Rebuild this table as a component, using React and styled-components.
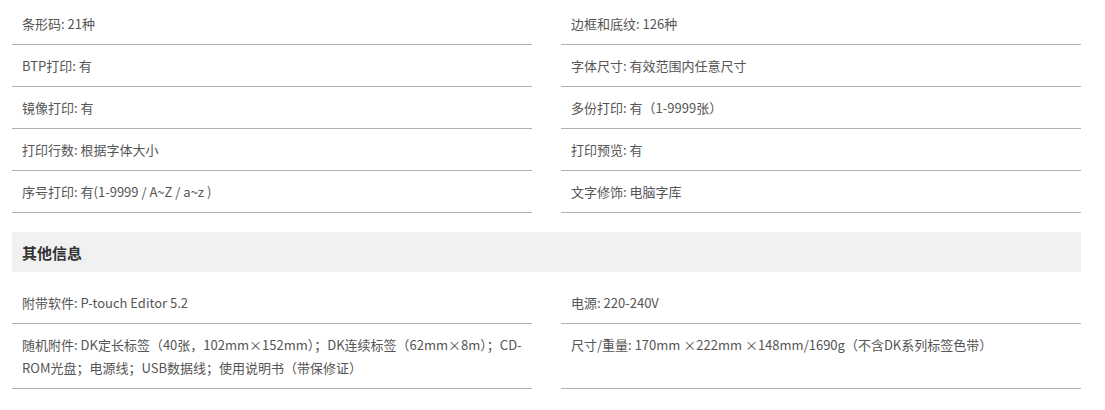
import React from 'react';
import styled, { createGlobalStyle } from 'styled-components';

const textColor = '#555';
const lineColor = '#b1b1b1';

const GlobalStyle = createGlobalStyle`
  body {
    margin: 0;
    background: #fff;
    font-family: "Noto Sans CJK SC", "Noto Sans", sans-serif;
  }
`;

const Page = styled.div`
  width: 1069px;
  padding: 3px 0 0 12px;
`;

const SpecGrid = styled.div`
  display: grid;
  grid-template-columns: 520px 520px;
  column-gap: 29px;
`;

const SpecCell = styled.div`
  padding: 9px 10px 9px 10px;
  border-bottom: 1px solid ${lineColor};
  font-size: 13px;
  line-height: 23px;
  color: ${textColor};
`;

const SectionTitle = styled.h3`
  margin: 19px 0 10px;
  height: 40px;
  display: flex;
  align-items: center;
  padding: 0 10px;
  background: #f1f1f1;
  font-size: 15px;
  font-weight: 700;
  color: #333;
`;

const printSpecs = [
  ['条形码', '21种'],
  ['边框和底纹', '126种'],
  ['BTP打印', '有'],
  ['字体尺寸', '有效范围内任意尺寸'],
  ['镜像打印', '有'],
  ['多份打印', '有（1-9999张）'],
  ['打印行数', '根据字体大小'],
  ['打印预览', '有'],
  ['序号打印', '有(1-9999 / A~Z / a~z )'],
  ['文字修饰', '电脑字库'],
];

const otherSpecs = [
  ['附带软件', 'P-touch Editor 5.2'],
  ['电源', '220-240V'],
  ['随机附件', 'DK定长标签（40张，102mm×152mm）；DK连续标签（62mm×8m）；CD-ROM光盘；电源线；USB数据线；使用说明书（带保修证）'],
  ['尺寸/重量', '170mm ×222mm ×148mm/1690g（不含DK系列标签色带）'],
];

const SpecList = ({ items }) => (
  <SpecGrid>
    {items.map(([label, value]) => (
      <SpecCell key={label}>{label}: {value}</SpecCell>
    ))}
  </SpecGrid>
);

const App = () => (
  <Page>
    <GlobalStyle />
    <SpecList items={printSpecs} />
    <SectionTitle>其他信息</SectionTitle>
    <SpecList items={otherSpecs} />
  </Page>
);

export default App;
